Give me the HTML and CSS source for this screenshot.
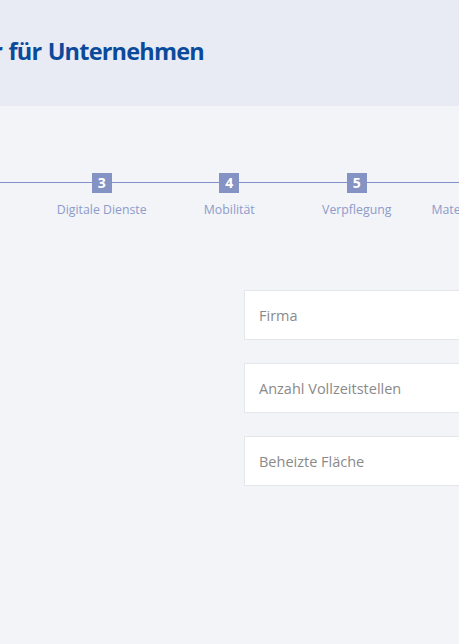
FILE: index.html
```html
<!DOCTYPE html>
<html lang="de">
<head>
<meta charset="utf-8">
<title>CO₂-Rechner für Unternehmen</title>
<link rel="stylesheet" href="styles.css">
</head>
<body>
<div class="page">
  <header class="header">
    <div class="title-wrap">
      <h1 class="title">CO₂-Rechner für Unternehmen</h1>
    </div>
  </header>
  <main class="main">
    <nav class="steps">
      <div class="step"><span class="num">1</span><span class="label">Allgemein</span></div>
      <div class="step"><span class="num">2</span><span class="label">Energie</span></div>
      <div class="step"><span class="num">3</span><span class="label">Digitale Dienste</span></div>
      <div class="step"><span class="num">4</span><span class="label">Mobilität</span></div>
      <div class="step"><span class="num">5</span><span class="label">Verpflegung</span></div>
      <div class="step"><span class="num">6</span><span class="label">Materialverbrauch</span></div>
    </nav>
    <form class="form">
      <input class="field" type="text" placeholder="Firma">
      <input class="field" type="text" placeholder="Anzahl Vollzeitstellen">
      <input class="field" type="text" placeholder="Beheizte Fläche">
    </form>
  </main>
</div>
</body>
</html>
```
FILE: styles.css
```css
* { box-sizing: border-box; }
html, body { margin: 0; padding: 0; }
body {
  background: #f3f4f8;
  font-family: "Open Sans", "DejaVu Sans", sans-serif;
  overflow: hidden;
}
.page { width: 459px; height: 644px; overflow: hidden; }
.header {
  height: 106px;
  background: #e8ebf4;
  display: flex;
  align-items: flex-start;
}
.title-wrap {
  width: 204px;
  display: flex;
  justify-content: flex-end;
  padding-top: 35px;
}
.title {
  margin: 0;
  white-space: nowrap;
  font-size: 23.5px;
  line-height: 32px;
  font-weight: 700;
  color: #0b4a9b;
  letter-spacing: -0.8px;
  word-spacing: 1px;
}
.main { padding-top: 67px; }
.steps {
  display: flex;
  margin-left: -217px;
  width: 800px;
  position: relative;
}
.steps::before {
  content: "";
  position: absolute;
  left: 0; right: 0;
  top: 9px;
  height: 1px;
  background: #8391cb;
}
.step {
  flex: 0 0 127.5px;
  display: flex;
  flex-direction: column;
  align-items: center;
  position: relative;
}
.num {
  width: 20px; height: 20px;
  background: #8592c4;
  color: #fff;
  font-size: 14px;
  font-weight: 700;
  line-height: 20px;
  text-align: center;
}
.label {
  margin-top: 8px;
  font-size: 12.3px;
  line-height: 17px;
  color: #8d9bcb;
  white-space: nowrap;
}
.form {
  margin-top: 72px;
  margin-left: 244px;
  display: flex;
  flex-direction: column;
  gap: 23px;
}
.field {
  display: block;
  width: 300px;
  height: 50px;
  border: 1px solid #e4e6ec;
  background: #fff;
  padding: 0 0 0 14px;
  font-family: "Open Sans", "DejaVu Sans", sans-serif;
  font-size: 14.5px;
  color: #333;
  outline: none;
}
.field::placeholder { color: #8a8a8a; }
```
